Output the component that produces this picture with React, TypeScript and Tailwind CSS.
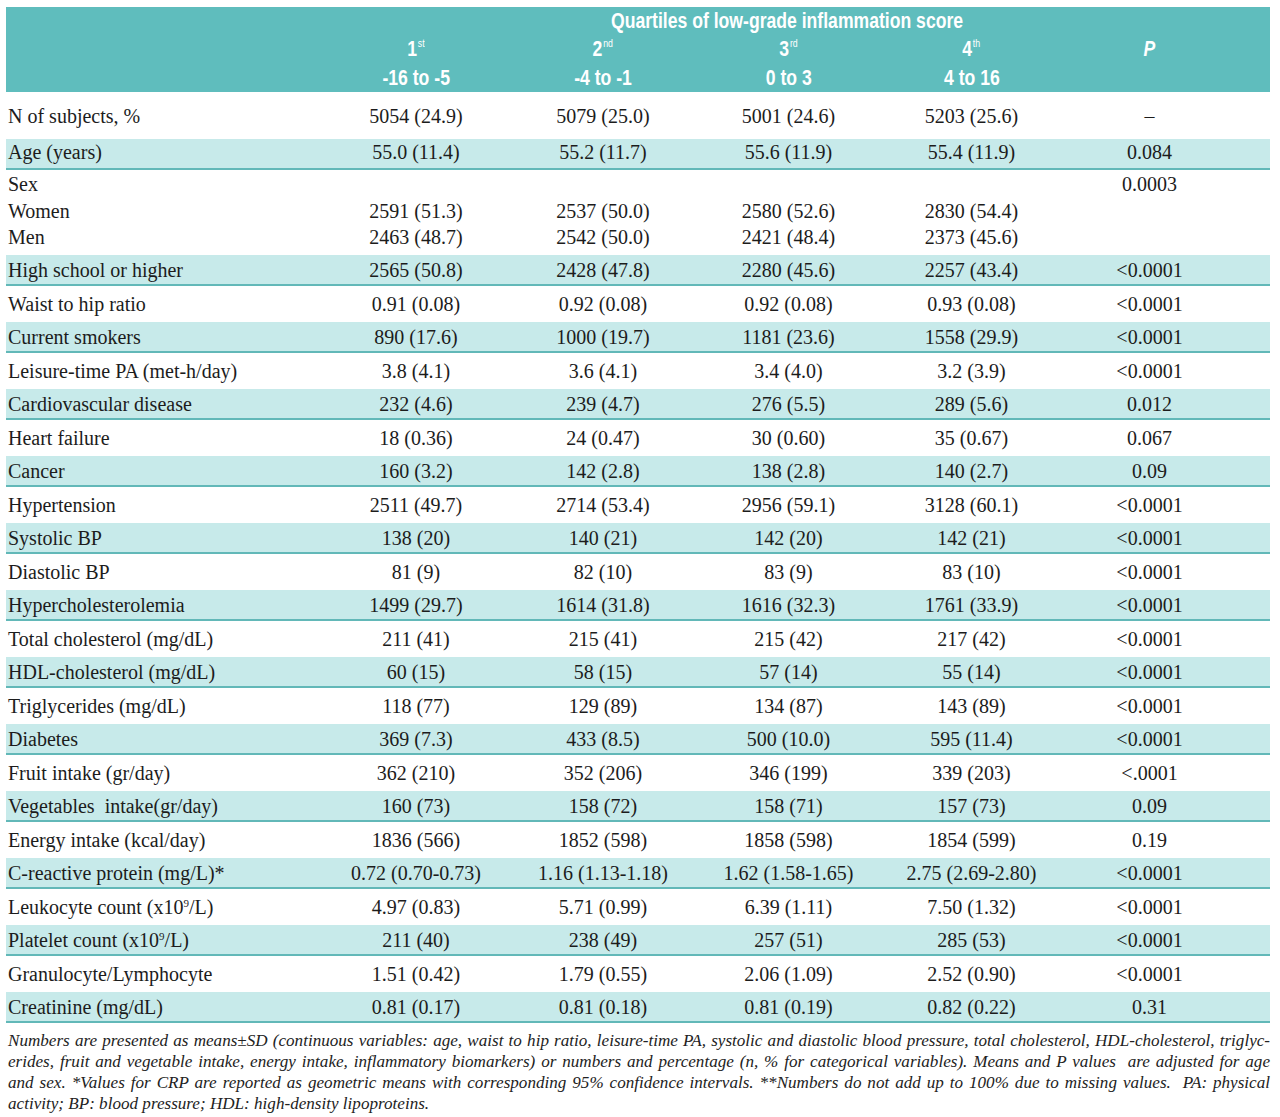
import React from "react"

type Row = {
  label: React.ReactNode
  cells: React.ReactNode[]
  p: string
}

const serif = "font-['Liberation_Serif','Times_New_Roman',serif]"
const sans = "font-['Liberation_Sans',Arial,sans-serif]"

const nine = <sup className="text-[11px] relative -top-[7px]">9</sup>

const ROWS: Row[] = [
  { label: "High school or higher", cells: ["2565 (50.8)", "2428 (47.8)", "2280 (45.6)", "2257 (43.4)"], p: "<0.0001" },
  { label: "Waist to hip ratio", cells: ["0.91 (0.08)", "0.92 (0.08)", "0.92 (0.08)", "0.93 (0.08)"], p: "<0.0001" },
  { label: "Current smokers", cells: ["890 (17.6)", "1000 (19.7)", "1181 (23.6)", "1558 (29.9)"], p: "<0.0001" },
  { label: "Leisure-time PA (met-h/day)", cells: ["3.8 (4.1)", "3.6 (4.1)", "3.4 (4.0)", "3.2 (3.9)"], p: "<0.0001" },
  { label: "Cardiovascular disease", cells: ["232 (4.6)", "239 (4.7)", "276 (5.5)", "289 (5.6)"], p: "0.012" },
  { label: "Heart failure", cells: ["18 (0.36)", "24 (0.47)", "30 (0.60)", "35 (0.67)"], p: "0.067" },
  { label: "Cancer", cells: ["160 (3.2)", "142 (2.8)", "138 (2.8)", "140 (2.7)"], p: "0.09" },
  { label: "Hypertension", cells: ["2511 (49.7)", "2714 (53.4)", "2956 (59.1)", "3128 (60.1)"], p: "<0.0001" },
  { label: "Systolic BP", cells: ["138 (20)", "140 (21)", "142 (20)", "142 (21)"], p: "<0.0001" },
  { label: "Diastolic BP", cells: ["81 (9)", "82 (10)", "83 (9)", "83 (10)"], p: "<0.0001" },
  { label: "Hypercholesterolemia", cells: ["1499 (29.7)", "1614 (31.8)", "1616 (32.3)", "1761 (33.9)"], p: "<0.0001" },
  { label: "Total cholesterol (mg/dL)", cells: ["211 (41)", "215 (41)", "215 (42)", "217 (42)"], p: "<0.0001" },
  { label: "HDL-cholesterol (mg/dL)", cells: ["60 (15)", "58 (15)", "57 (14)", "55 (14)"], p: "<0.0001" },
  { label: "Triglycerides (mg/dL)", cells: ["118 (77)", "129 (89)", "134 (87)", "143 (89)"], p: "<0.0001" },
  { label: "Diabetes", cells: ["369 (7.3)", "433 (8.5)", "500 (10.0)", "595 (11.4)"], p: "<0.0001" },
  { label: "Fruit intake (gr/day)", cells: ["362 (210)", "352 (206)", "346 (199)", "339 (203)"], p: "<.0001" },
  { label: "Vegetables  intake(gr/day)", cells: ["160 (73)", "158 (72)", "158 (71)", "157 (73)"], p: "0.09" },
  { label: "Energy intake (kcal/day)", cells: ["1836 (566)", "1852 (598)", "1858 (598)", "1854 (599)"], p: "0.19" },
  { label: "C-reactive protein (mg/L)*", cells: ["0.72 (0.70-0.73)", "1.16 (1.13-1.18)", "1.62 (1.58-1.65)", "2.75 (2.69-2.80)"], p: "<0.0001" },
  { label: <>Leukocyte count (x10{nine}/L)</>, cells: ["4.97 (0.83)", "5.71 (0.99)", "6.39 (1.11)", "7.50 (1.32)"], p: "<0.0001" },
  { label: <>Platelet count (x10{nine}/L)</>, cells: ["211 (40)", "238 (49)", "257 (51)", "285 (53)"], p: "<0.0001" },
  { label: "Granulocyte/Lymphocyte", cells: ["1.51 (0.42)", "1.79 (0.55)", "2.06 (1.09)", "2.52 (0.90)"], p: "<0.0001" },
  { label: "Creatinine (mg/dL)", cells: ["0.81 (0.17)", "0.81 (0.18)", "0.81 (0.19)", "0.82 (0.22)"], p: "0.31" },
]

const GRID = "grid grid-cols-[316px_188px_186px_185px_181px_175px_1fr]"

// condensed look for the header lettering
function Cond({ children, className = "" }: { children: React.ReactNode; className?: string }) {
  return <span className={`inline-block scale-x-[0.8] whitespace-nowrap ${className}`}>{children}</span>
}

function Quartile({ n, sup }: { n: string; sup: string }) {
  return (
    <Cond>
      {n}
      <sup className="text-[11px] font-normal relative -top-[9px] ml-[1px]">{sup}</sup>
    </Cond>
  )
}

export default function App() {
  return (
    <div className={`min-h-screen bg-white pt-[7px] text-[#1c1c1c] ${serif}`}>
      <div className="ml-[6px] w-[1264px]">
        {/* Header */}
        <div className={`${GRID} h-[85px] bg-[#5fbdbd] text-white ${sans} font-bold text-[22px] leading-[27px]`}>
          <div className="col-start-2 col-span-5 pl-[16px] text-center">
            <Cond>Quartiles of low-grade inflammation score</Cond>
          </div>
          <div className="col-start-2 text-center"><Quartile n="1" sup="st" /></div>
          <div className="text-center"><Quartile n="2" sup="nd" /></div>
          <div className="text-center"><Quartile n="3" sup="rd" /></div>
          <div className="text-center"><Quartile n="4" sup="th" /></div>
          <div className="text-center italic"><Cond>P</Cond></div>
          <div />
          <div className="col-start-2 text-center"><Cond>-16 to -5</Cond></div>
          <div className="text-center"><Cond>-4 to -1</Cond></div>
          <div className="text-center"><Cond>0 to 3</Cond></div>
          <div className="text-center"><Cond>4 to 16</Cond></div>
        </div>

        {/* Body */}
        <div className="text-[20px] leading-[26px]">
          <div className={`${GRID} h-[47px] items-center`}>
            <div className="pl-[2px]">N of subjects, %</div>
            <div className="text-center">5054 (24.9)</div>
            <div className="text-center">5079 (25.0)</div>
            <div className="text-center">5001 (24.6)</div>
            <div className="text-center">5203 (25.6)</div>
            <div className="text-center">–</div>
          </div>

          <div className={`${GRID} h-[31px] items-center pb-[3px] bg-[#c7eaea] border-b-2 border-[#62b8b8]`}>
            <div className="pl-[2px]">Age (years)</div>
            <div className="text-center">55.0 (11.4)</div>
            <div className="text-center">55.2 (11.7)</div>
            <div className="text-center">55.6 (11.9)</div>
            <div className="text-center">55.4 (11.9)</div>
            <div className="text-center">0.084</div>
          </div>

          <div className={`${GRID} h-[85px] pt-[1px] leading-[26.5px]`}>
            <div className="pl-[2px]">
              <div>Sex</div>
              <div>Women</div>
              <div>Men</div>
            </div>
            {[
              ["2591 (51.3)", "2463 (48.7)"],
              ["2537 (50.0)", "2542 (50.0)"],
              ["2580 (52.6)", "2421 (48.4)"],
              ["2830 (54.4)", "2373 (45.6)"],
            ].map(([w, m], i) => (
              <div key={i} className="text-center">
                <div>&nbsp;</div>
                <div>{w}</div>
                <div>{m}</div>
              </div>
            ))}
            <div className="text-center">0.0003</div>
          </div>

          {ROWS.map((r, i) => {
            const shaded = i % 2 === 0
            return (
              <div
                key={i}
                className={`${GRID} items-center ${
                  shaded ? "h-[31px] bg-[#c7eaea] border-b-2 border-[#62b8b8]" : "h-[36px]"
                }`}
              >
                <div className="pl-[2px] whitespace-pre">{r.label}</div>
                {r.cells.map((c, j) => (
                  <div key={j} className="text-center whitespace-nowrap">{c}</div>
                ))}
                <div className="text-center">{r.p}</div>
              </div>
            )
          })}
        </div>

        {/* Footnote */}
        <div className="pt-[7px] pl-[2px] italic text-[17.1px] leading-[21px] text-[#222]">
          <div className="[text-align-last:justify] text-justify whitespace-pre">
            Numbers are presented as means±SD (continuous variables: age, waist to hip ratio, leisure-time PA, systolic and diastolic blood pressure, total cholesterol, HDL-cholesterol, triglyc-
          </div>
          <div className="[text-align-last:justify] text-justify whitespace-pre">
            erides, fruit and vegetable intake, energy intake, inflammatory biomarkers) or numbers and percentage (n, % for categorical variables). Means and P values  are adjusted for age
          </div>
          <div className="[text-align-last:justify] text-justify whitespace-pre">
            and sex. *Values for CRP are reported as geometric means with corresponding 95% confidence intervals. **Numbers do not add up to 100% due to missing values.  PA: physical
          </div>
          <div>activity; BP: blood pressure; HDL: high-density lipoproteins.</div>
        </div>
      </div>
    </div>
  )
}
